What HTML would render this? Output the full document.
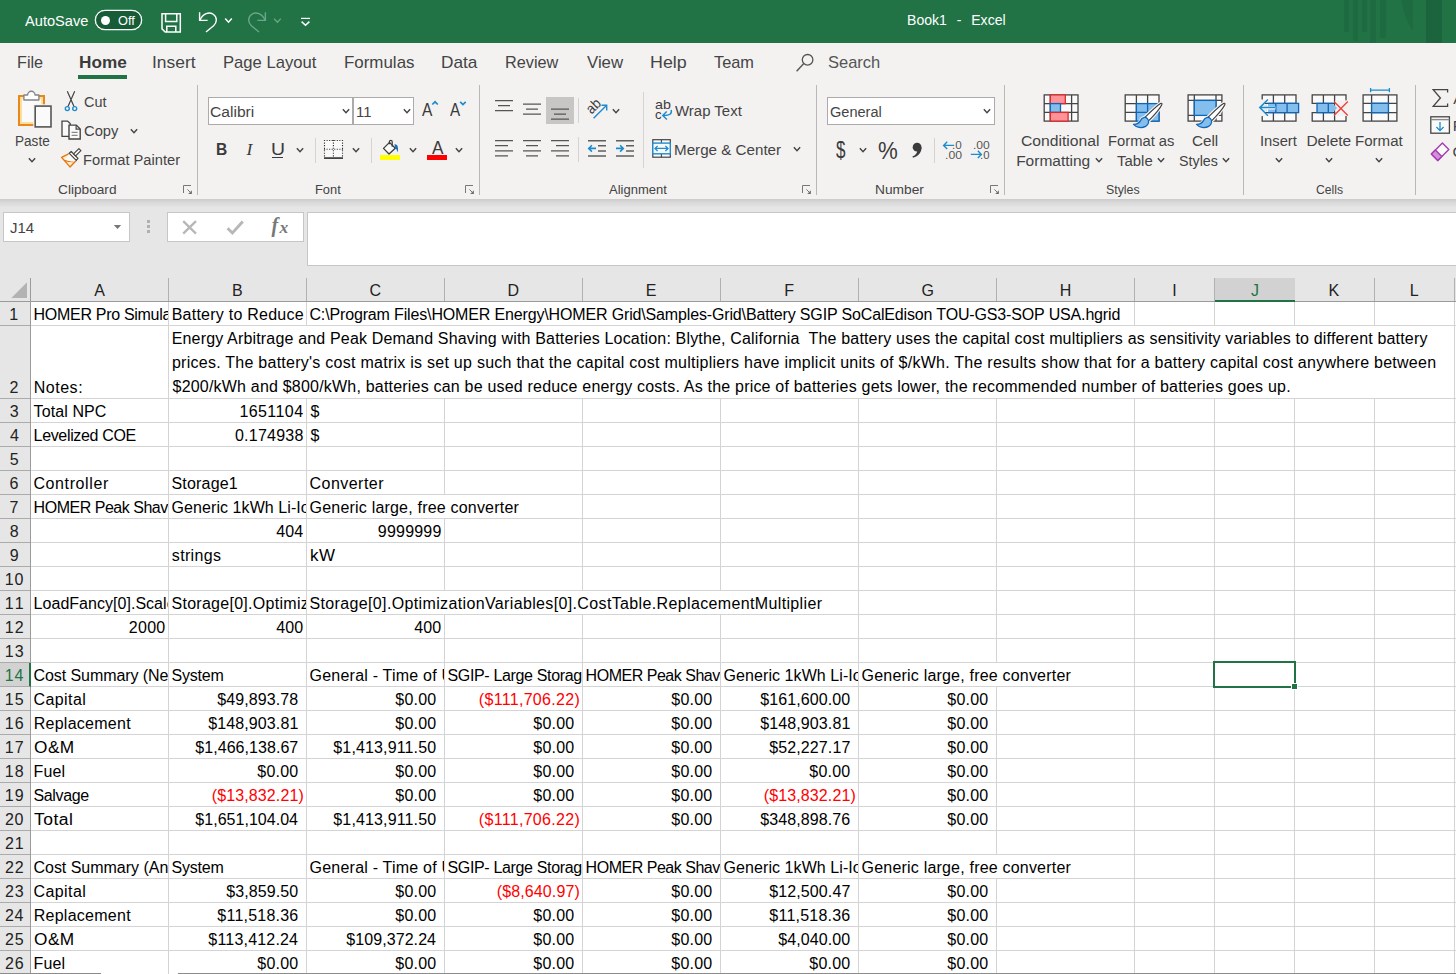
<!DOCTYPE html>
<html lang="en">
<head>
<meta charset="utf-8">
<title>Book1 - Excel</title>
<style>
html,body{margin:0;padding:0}
body{width:1456px;height:974px;overflow:hidden;position:relative;background:#e6e6e6;font-family:"Liberation Sans",sans-serif;color:#000}
.t{position:absolute;white-space:pre;display:block;transform-origin:0 0}
svg{position:absolute;overflow:visible}

#titlebar{position:absolute;left:0;top:0;width:1456px;height:43px;background:#217346;overflow:hidden}
.toggle{position:absolute;left:95px;top:10px;width:45px;height:18px;border:1px solid #fff;box-shadow:0 0 0 .3px #fff;border-radius:10px;background:#185c37}
.toggle i{position:absolute;left:5px;top:4.5px;width:9px;height:9px;border-radius:50%;background:#fff}
#tabs{position:absolute;left:0;top:43px;width:1456px;height:39px;background:#f3f2f1;overflow:hidden}
.tabline{position:absolute;left:78px;top:32px;width:49px;height:4px;background:#217346}
#ribbon{position:absolute;left:0;top:82px;width:1456px;height:117px;background:#f3f2f1;overflow:hidden}
.gsep{position:absolute;top:3px;width:1px;height:110px;background:#b9b8b7}
.sep{position:absolute;width:1px;background:#d4d3d2}
.combo{position:absolute;background:#fff;border:1px solid #ababab}
.uline{position:absolute;height:1px;background:#3b3b3b}
#fbar{position:absolute;left:0;top:199px;width:1456px;height:79px;background:#e6e6e6;overflow:hidden}
#fbar .shadow{position:absolute;left:0;top:0;width:1456px;height:9px;background:linear-gradient(#cbcbcb,#d9d9d9 40%,#e6e6e6)}
.namebox{position:absolute;left:3px;top:13px;width:125px;height:28px;background:#fff;border:1px solid #c6c6c6}
.fxbox{position:absolute;left:167px;top:13px;width:135px;height:28px;background:#fff;border:1px solid #c6c6c6}
.finput{position:absolute;left:307px;top:13px;width:1150px;height:52px;background:#fff;border:1px solid #c6c6c6}

#sheet{position:absolute;left:0;top:278px;width:1456px;height:696px;background:#e6e6e6;overflow:hidden}
#colhead{position:absolute;left:0;top:0;width:1456px;height:23px;border-bottom:1px solid #9b9b9b}
#colhead .corner{position:absolute;left:0;top:0;width:30px;height:23px;border-right:1px solid #9b9b9b}
#colhead .corner svg{display:block}
.ch{position:absolute;top:0;height:23px;border-right:1px solid #b1b1b1}
.ch.sel{background:#d2d2d2;height:22px;border-bottom:2px solid #217346;border-right:0;padding-right:1px}
#rowhead{position:absolute;left:0;top:24px;width:30px;height:672px;border-right:1px solid #9b9b9b}
.rh{position:absolute;left:0;width:30px;border-bottom:1px solid #ababab}
.rh.sel{background:#d2d2d2;width:29px;border-right:2px solid #217346}
.tabedge{position:absolute;top:695px;height:1px;background:#8c8c8c}
#cells{position:absolute;left:31px;top:24px;width:1425px;height:672px;background:#fff;overflow:hidden}
.c{position:absolute;border-right:1px solid #d4d4d4;border-bottom:1px solid #d4d4d4;overflow:hidden}
#selbox{position:absolute;left:1182px;top:359px;width:79px;height:23px;border:2px solid #217346}
#selhandle{position:absolute;left:1260px;top:381px;width:5px;height:5px;background:#217346;border:1px solid #fff}
</style>
</head>
<body>
<div id="titlebar">
<svg class="ic deco" style="left:1340px;top:0px" width="116" height="43" viewBox="1340 0 116 43"><rect x="1344" y="0" width="5" height="32" fill="#1e6b41"/><rect x="1353" y="0" width="5" height="41" fill="#1e6b41"/><rect x="1362" y="0" width="5" height="32" fill="#1e6b41"/><rect x="1370" y="0" width="6" height="43" fill="#1e6b41"/><rect x="1380" y="0" width="6" height="38" fill="#1e6b41"/><path d="M1401.5 0H1413V31C1407 22 1403 11 1401.5 0z" fill="#1e6b41"/><rect x="1426" y="0" width="16" height="43" fill="#1c643d"/></svg>
<span class="t" style="left:24.97px;top:11px;font-size:15.5px;line-height:20px;transform:scaleX(0.943);color:#fff;">AutoSave</span>
<div class="toggle"><i></i><span class="t" style="left:22.2px;top:2px;font-size:12.6px;line-height:16px;transform:scaleX(1.013);color:#fff;">Off</span></div>
<svg class="ic save" style="left:160px;top:11px" width="23" height="23" viewBox="160 11 23 23"><path d="M162 13.7H180.3V32.1H165.2L162 28.9z" fill="none" stroke="#ffffff" stroke-width="1.5"/><path d="M165.6 13.7V21.4H176.8V13.7" fill="none" stroke="#ffffff" stroke-width="1.5"/><path d="M166.8 32.1V26.2H175.8V32.1" fill="none" stroke="#ffffff" stroke-width="1.5"/></svg><svg class="ic undo" style="left:197px;top:10px" width="38" height="24" viewBox="197 10 38 24"><path d="M199.6 12.3V20.4H207.6" fill="none" stroke="#ffffff" stroke-width="1.4"/><path d="M199.9 20.1C203 13.5 209 11.3 213.2 14.3C217.6 17.4 217 22.6 213.6 25.8L206 32" fill="none" stroke="#ffffff" stroke-width="1.4"/><path d="M225.2 18.6L228.5 22.2L231.8 18.6" fill="none" stroke="#ffffff" stroke-width="1.5"/></svg><svg class="ic redo" style="left:246px;top:10px" width="38" height="24" viewBox="246 10 38 24"><path d="M265.4 12.3V20.4H257.4" fill="none" stroke="#6ba688" stroke-width="1.4"/><path d="M265.1 20.1C262 13.5 256 11.3 251.8 14.3C247.4 17.4 248 22.6 251.4 25.8L259 32" fill="none" stroke="#6ba688" stroke-width="1.4"/><path d="M274 18.6L277.4 22.2L280.8 18.6" fill="none" stroke="#6ba688" stroke-width="1.3"/></svg><svg class="ic qatmore" style="left:299px;top:15px" width="13" height="13" viewBox="299 15 13 13"><path d="M301 18.4H310" fill="none" stroke="#ffffff" stroke-width="1.2"/><path d="M301.6 21.6L305.5 25.3L309.4 21.6" fill="none" stroke="#ffffff" stroke-width="1.5"/></svg>
<div class="wtitle"><span class="t" style="left:906.64px;top:10px;font-size:15.5px;line-height:20px;transform:scaleX(0.908);color:#fff;word-spacing:1.1px;">Book1  -  Excel</span></div>
</div>
<div id="tabs">
<span class="t tab" style="left:17.27px;top:9px;font-size:17px;line-height:22px;transform:scaleX(0.951);color:#444444;">File</span>
<span class="t tab active" style="left:78.55px;top:9px;font-size:17px;line-height:22px;transform:scaleX(1.011);color:#3b3b3b;font-weight:bold;">Home</span>
<span class="t tab" style="left:151.99px;top:9px;font-size:17px;line-height:22px;transform:scaleX(1.024);color:#444444;">Insert</span>
<span class="t tab" style="left:222.63px;top:9px;font-size:17px;line-height:22px;transform:scaleX(0.979);color:#444444;">Page Layout</span>
<span class="t tab" style="left:344.11px;top:9px;font-size:17px;line-height:22px;transform:scaleX(0.995);color:#444444;">Formulas</span>
<span class="t tab" style="left:441.09px;top:9px;font-size:17px;line-height:22px;transform:scaleX(1.014);color:#444444;">Data</span>
<span class="t tab" style="left:504.67px;top:9px;font-size:17px;line-height:22px;transform:scaleX(0.956);color:#444444;">Review</span>
<span class="t tab" style="left:586.93px;top:9px;font-size:17px;line-height:22px;transform:scaleX(0.986);color:#444444;">View</span>
<span class="t tab" style="left:649.54px;top:9px;font-size:17px;line-height:22px;transform:scaleX(1.050);color:#444444;">Help</span>
<span class="t tab" style="left:714.13px;top:9px;font-size:17px;line-height:22px;transform:scaleX(0.961);color:#444444;">Team</span>
<div class="tabline"></div>
<svg class="ic search" style="left:795px;top:9px" width="20" height="21" viewBox="795 52 20 21"><circle cx="807.6" cy="59.8" r="5.3" fill="none" stroke="#555" stroke-width="1.3"/><path d="M803.8 63.6L796.6 71.2" fill="none" stroke="#555" stroke-width="1.4"/></svg>
<span class="t" style="left:828.25px;top:9px;font-size:17px;line-height:22px;transform:scaleX(0.971);color:#555;">Search</span>
</div>
<div id="ribbon">
<div class="gsep" style="left:197px"></div>
<div class="gsep" style="left:479px"></div>
<div class="gsep" style="left:816px"></div>
<div class="gsep" style="left:1004px"></div>
<div class="gsep" style="left:1243px"></div>
<div class="gsep" style="left:1415px"></div>
<div class="sep" style="left:315px;top:56px;height:25px"></div>
<div class="sep" style="left:371px;top:56px;height:25px"></div>
<div class="sep" style="left:578px;top:16px;height:25px"></div>
<div class="sep" style="left:578px;top:55px;height:25px"></div>
<div class="sep" style="left:643px;top:10px;height:76px"></div>
<div class="sep" style="left:934px;top:56px;height:25px"></div>
<div class="group" id="g-clipboard">
<svg class="ic paste" style="left:16px;top:6px" width="38" height="42" viewBox="16 88 38 42"><rect x="19" y="96" width="25" height="29" fill="#fafafa" stroke="#e8871e" stroke-width="2"/><rect x="21" y="98" width="21" height="25" fill="none" stroke="#fbdf9b" stroke-width="2"/><path d="M23.9 95H27.6A3.7 3.7 0 0 1 35 95H38.9V100H23.9z" fill="#fff" stroke="#858585" stroke-width="1.4" stroke-linejoin="round"/><rect x="33.3" y="104.3" width="19.4" height="24.4" fill="#f3f2f1"/><rect x="35.2" y="106.1" width="15.8" height="20.8" fill="#fafafa" stroke="#555" stroke-width="1.6"/></svg>
<span class="t" style="left:14.69px;top:49px;font-size:15.5px;line-height:20px;transform:scaleX(0.876);color:#444444;">Paste</span>
<svg class="ic chev" style="left:26.5px;top:73.5px" width="10" height="8" viewBox="26.5 155.5 10 8"><path d="M28.35 157.8L31.5 161.2L34.65 157.8" fill="none" stroke="#444444" stroke-width="1.45"/></svg>
<svg class="ic cut" style="left:63px;top:8px" width="16" height="23" viewBox="63 90 16 23"><path d="M67.3 91.3L74 106.6M74.7 91.3L68 106.6" fill="none" stroke="#444444" stroke-width="1.2"/><circle cx="67.3" cy="108.6" r="2" fill="none" stroke="#1e8bcd" stroke-width="1.4"/><circle cx="74.7" cy="108.6" r="2" fill="none" stroke="#1e8bcd" stroke-width="1.4"/></svg>
<span class="t" style="left:83.67px;top:10px;font-size:15.5px;line-height:20px;transform:scaleX(0.930);color:#444444;">Cut</span>
<svg class="ic copy" style="left:60px;top:37px" width="23" height="23" viewBox="60 119 23 23"><path d="M62 121.1H67.5L70.2 123.6V136.4H62z" fill="#fafafa" stroke="#444444" stroke-width="1.3"/><path d="M69 125.1H76.3L80.2 129V139H69z" fill="#fafafa" stroke="#444444" stroke-width="1.4"/><path d="M76.1 125.3V129.2H80" fill="none" stroke="#444444" stroke-width="1.2"/><path d="M71.6 132.4H77.6M71.6 135.4H77.6" fill="none" stroke="#8a8a8a" stroke-width="1.1"/></svg>
<span class="t" style="left:83.65px;top:39px;font-size:15.5px;line-height:20px;transform:scaleX(0.950);color:#444444;">Copy</span>
<svg class="ic chev" style="left:128.5px;top:44.5px" width="10" height="8" viewBox="128.5 126.5 10 8"><path d="M130.35 128.8L133.5 132.2L136.65 128.8" fill="none" stroke="#444444" stroke-width="1.45"/></svg>
<svg class="ic painter" style="left:60px;top:65px" width="23" height="22" viewBox="60 147 23 22"><path d="M61.6 157.4L69.2 153.6L76.2 160.6L70 166.9z" fill="#fdf0d0" stroke="#e8740c" stroke-width="1.4" stroke-linejoin="round"/><path d="M64.5 160.2C67.5 161.6 70.2 161.9 73.3 161.7" fill="none" stroke="#e8740c" stroke-width="1.2"/><path d="M65.4 159.3L69.2 153.6L76.2 160.6L72.8 161.4C70 161.6 67.6 160.8 65.4 159.3z" fill="#fafafa"/><path d="M69.3 153.3L71.2 151.5L78 158.3L76.2 160.3z" fill="#fafafa" stroke="#444444" stroke-width="1.2" stroke-linejoin="round"/><path d="M73.6 153.9L78.9 148.6L80.9 150.6L75.6 155.9z" fill="#fafafa" stroke="#444444" stroke-width="1.2" stroke-linejoin="round"/></svg>
<span class="t" style="left:83.2px;top:68px;font-size:15.5px;line-height:20px;transform:scaleX(0.947);color:#444444;">Format Painter</span>
<span class="t" style="left:57.81px;top:99px;font-size:13.6px;line-height:18px;transform:scaleX(1.006);color:#444444;">Clipboard</span>
<svg class="ic launcher" style="left:183px;top:103px" width="10" height="10" viewBox="183 185 10 10"><path d="M183.5 193V185.5H191" fill="none" stroke="#777" stroke-width="1"/><path d="M187.4 189.4L191 193" fill="none" stroke="#777" stroke-width="1"/><path d="M191.9 190.2V193.9H188.2z" fill="#6e6e6e"/></svg>
</div>
<div class="group" id="g-font">
<div class="combo" style="left:208px;top:15px;width:143px;height:26px"><span class="t" style="left:1.21px;top:4px;font-size:15.5px;line-height:20px;transform:scaleX(1.007);color:#444444;">Calibri</span></div>
<svg class="ic chev" style="left:340.5px;top:25.3px" width="10" height="8" viewBox="340.5 107.3 10 8"><path d="M342.35 109.6L345.5 113L348.65 109.6" fill="none" stroke="#444444" stroke-width="1.45"/></svg>
<div class="combo" style="left:353px;top:15px;width:59px;height:26px"><span class="t" style="left:1.87px;top:4px;font-size:15.5px;line-height:20px;transform:scaleX(0.961);color:#444444;">11</span></div>
<svg class="ic chev" style="left:401.5px;top:25.3px" width="10" height="8" viewBox="401.5 107.3 10 8"><path d="M403.35 109.6L406.5 113L409.65 109.6" fill="none" stroke="#444444" stroke-width="1.45"/></svg>
<span class="t" style="left:422.27px;top:17px;font-size:17.5px;line-height:23px;transform:scaleX(0.888);color:#3b3b3b;">A</span>
<span class="t" style="left:450.37px;top:17px;font-size:17.5px;line-height:23px;transform:scaleX(0.870);color:#3b3b3b;">A</span>
<svg class="ic gs" style="left:430px;top:18px" width="38" height="7" viewBox="430 100 38 7"><path d="M432.3 104.5L435.05 101.8L437.8 104.5" fill="none" stroke="#1e8bcd" stroke-width="1.7"/><path d="M460.2 101.9L462.95 104.6L465.7 101.9" fill="none" stroke="#1e8bcd" stroke-width="1.7"/></svg>
<span class="t" style="left:216.46px;top:57px;font-size:16.4px;line-height:21px;transform:scaleX(0.950);color:#3b3b3b;font-weight:bold;">B</span>
<span class="t" style="left:246.57px;top:56px;font-size:17.5px;line-height:23px;color:#3b3b3b;font-family:'Liberation Serif',serif;font-style:italic;">I</span>
<span class="t" style="left:270.51px;top:57px;font-size:16px;line-height:21px;transform:scaleX(1.211);color:#3b3b3b;">U</span>
<div class="uline" style="left:272px;top:75px;width:11px"></div>
<svg class="ic chev" style="left:295.3px;top:64.3px" width="10" height="8" viewBox="295.3 146.3 10 8"><path d="M297.15 148.6L300.3 152L303.45 148.6" fill="none" stroke="#444444" stroke-width="1.45"/></svg>
<svg class="ic borders" style="left:323px;top:57px" width="21" height="21" viewBox="323 139 21 21"><rect x="324.5" y="140.5" width="18" height="16" fill="#fafafa"/><path d="M324 140.5H343M324 149.3H343M324.5 140V157M333.4 140V157M342.5 140V157" fill="none" stroke="#333" stroke-width="1.1" stroke-dasharray="1.1 1.45"/><path d="M324 158.1H343" fill="none" stroke="#444444" stroke-width="1.8"/></svg>
<svg class="ic chev" style="left:351.3px;top:64.3px" width="10" height="8" viewBox="351.3 146.3 10 8"><path d="M353.15 148.6L356.3 152L359.45 148.6" fill="none" stroke="#444444" stroke-width="1.45"/></svg>
<svg class="ic fill" style="left:379px;top:56px" width="22" height="23" viewBox="379 138 22 23"><rect x="380" y="155" width="20" height="5" fill="#ffff00"/><path d="M383.5 148.4L389.5 142.4L395.3 148.2L389 154z" fill="#fafafa" stroke="#3b3b3b" stroke-width="1.3" stroke-linejoin="round"/><path d="M389.4 144.2V141.8C389.4 139.8 392.2 139.8 392.2 141.8V146.8" fill="none" stroke="#3b3b3b" stroke-width="1.2"/><path d="M394.4 144.3C396.8 144.2 398 145.8 398 148.4V152.6C397.2 150.6 396.6 149.2 395.2 148z" fill="#1170c6"/></svg>
<svg class="ic chev" style="left:407.5px;top:64.3px" width="10" height="8" viewBox="407.5 146.3 10 8"><path d="M409.35 148.6L412.5 152L415.65 148.6" fill="none" stroke="#444444" stroke-width="1.45"/></svg>
<span class="t" style="left:431.57px;top:53px;font-size:19px;line-height:25px;transform:scaleX(0.905);color:#3b3b3b;">A</span>
<svg class="ic fcbar" style="left:427px;top:73px" width="20" height="5" viewBox="427 155 20 5"><rect x="427" y="155" width="20" height="5" fill="#ff0000"/></svg>
<svg class="ic chev" style="left:454.3px;top:64.3px" width="10" height="8" viewBox="454.3 146.3 10 8"><path d="M456.15 148.6L459.3 152L462.45 148.6" fill="none" stroke="#444444" stroke-width="1.45"/></svg>
<span class="t" style="left:315.34px;top:99px;font-size:13.6px;line-height:18px;transform:scaleX(0.946);color:#444444;">Font</span>
<svg class="ic launcher" style="left:465px;top:103px" width="10" height="10" viewBox="465 185 10 10"><path d="M465.5 193V185.5H473" fill="none" stroke="#777" stroke-width="1"/><path d="M469.4 189.4L473 193" fill="none" stroke="#777" stroke-width="1"/><path d="M473.9 190.2V193.9H470.2z" fill="#6e6e6e"/></svg>
</div>
<div class="group" id="g-align">
<svg class="ic align" style="left:494px;top:14px" width="81" height="62" viewBox="494 96 81 62"><rect x="546" y="97" width="28" height="27" fill="#c8c6c4"/><path d="M495 100.6H513M498 105.6H510M495 110.6H513M523 104.2H541M526 109.2H538M523 114.2H541M551 109.2H569M554 114.2H566M551 119.2H569M495 140.6H513M495 145.7H508M495 150.8H513M495 155.9H508M523 140.6H541M526 145.7H538M523 150.8H541M526 155.9H538M551 140.6H569M556 145.7H569M551 150.8H569M556 155.9H569" fill="none" stroke="#555" stroke-width="1.3"/></svg>
<span class="t" style="left:584.69px;top:15px;font-size:14.4px;line-height:19px;transform-origin:8.01px 8.8px;transform:rotate(-45deg) scaleX(0.920);color:#3b3b3b;">ab</span>
<svg class="ic orient" style="left:586px;top:17px" width="23" height="21" viewBox="586 99 23 21"><path d="M593.6 118.3L606.4 105.5M601.5 105.3H606.7V110.5" fill="none" stroke="#1e8bcd" stroke-width="1.4"/></svg>
<svg class="ic chev" style="left:610.5px;top:24.5px" width="10" height="8" viewBox="610.5 106.5 10 8"><path d="M612.35 108.8L615.5 112.2L618.65 108.8" fill="none" stroke="#444444" stroke-width="1.45"/></svg>
<svg class="ic indent" style="left:587px;top:57px" width="48" height="19" viewBox="587 139 48 19"><path d="M588 140.8H606M598 145.85H606M598 150.9H606M588 155.95H606" fill="none" stroke="#5f5f5f" stroke-width="1.5"/><path d="M588.8 148.4H596M591.9 145.2L588.7 148.4L591.9 151.6" fill="none" stroke="#1e8bcd" stroke-width="1.6"/><path d="M616 140.8H634M626 145.85H634M626 150.9H634M616 155.95H634" fill="none" stroke="#5f5f5f" stroke-width="1.5"/><path d="M616 148.4H623.2M620.1 145.2L623.3 148.4L620.1 151.6" fill="none" stroke="#1e8bcd" stroke-width="1.6"/></svg>
<span class="t" style="left:654.59px;top:15px;font-size:12.2px;line-height:16px;transform:scaleX(1.172);color:#3b3b3b;">ab</span>
<span class="t" style="left:654.74px;top:25px;font-size:12.2px;line-height:16px;transform:scaleX(1.084);color:#3b3b3b;">c</span>
<svg class="ic wrap" style="left:654px;top:18px" width="20" height="21" viewBox="654 100 20 21"><path d="M671.2 109.8C672.2 113.8 669.6 115.7 663.2 115.5M666.7 111.5L662.7 115.5L666.9 119.6" fill="none" stroke="#1e8bcd" stroke-width="1.4"/></svg>
<span class="t" style="left:675.33px;top:19px;font-size:15.5px;line-height:20px;transform:scaleX(0.965);color:#444444;">Wrap Text</span>
<svg class="ic merge" style="left:651px;top:56px" width="21" height="21" viewBox="651 138 21 21"><rect x="652.8" y="139.7" width="17.5" height="17.5" fill="#fafafa" stroke="#444444" stroke-width="1.2"/><path d="M661.4 139.7V143M661.4 154V157.2" fill="none" stroke="#444444" stroke-width="1.1"/><rect x="652.8" y="143.1" width="17.5" height="10.7" fill="#f6fafd" stroke="#1e8bcd" stroke-width="1.4"/><path d="M655 148.45H668M657.6 145.9L655 148.45L657.6 151M665.4 145.9L668 148.45L665.4 151" fill="none" stroke="#1e8bcd" stroke-width="1.3"/></svg>
<span class="t" style="left:674.16px;top:58px;font-size:15.5px;line-height:20px;transform:scaleX(0.979);color:#444444;">Merge &amp; Center</span>
<svg class="ic chev" style="left:791.5px;top:63.3px" width="10" height="8" viewBox="791.5 145.3 10 8"><path d="M793.35 147.6L796.5 151L799.65 147.6" fill="none" stroke="#444444" stroke-width="1.45"/></svg>
<span class="t" style="left:609.27px;top:99px;font-size:13.6px;line-height:18px;transform:scaleX(0.956);color:#444444;">Alignment</span>
<svg class="ic launcher" style="left:802px;top:103px" width="10" height="10" viewBox="802 185 10 10"><path d="M802.5 193V185.5H810" fill="none" stroke="#777" stroke-width="1"/><path d="M806.4 189.4L810 193" fill="none" stroke="#777" stroke-width="1"/><path d="M810.9 190.2V193.9H807.2z" fill="#6e6e6e"/></svg>
</div>
<div class="group" id="g-number">
<div class="combo" style="left:827px;top:15px;width:166px;height:26px"><span class="t" style="left:1.57px;top:4px;font-size:15.5px;line-height:20px;transform:scaleX(0.938);color:#444444;">General</span></div>
<svg class="ic chev" style="left:982.3px;top:25.3px" width="10" height="8" viewBox="982.3 107.3 10 8"><path d="M984.15 109.6L987.3 113L990.45 109.6" fill="none" stroke="#444444" stroke-width="1.45"/></svg>
<span class="t" style="left:835.72px;top:52px;font-size:24px;line-height:31px;transform:scaleX(0.708);color:#3b3b3b;">$</span>
<svg class="ic chev" style="left:858.3px;top:64.3px" width="10" height="8" viewBox="858.3 146.3 10 8"><path d="M860.15 148.6L863.3 152L866.45 148.6" fill="none" stroke="#444444" stroke-width="1.45"/></svg>
<span class="t" style="left:878.21px;top:53px;font-size:24px;line-height:31px;transform:scaleX(0.927);color:#3b3b3b;">%</span>
<svg class="ic comma" style="left:911px;top:60px" width="12" height="17" viewBox="911 142 12 17"><circle cx="917.1" cy="147.2" r="4.4" fill="#3b3b3b"/><path d="M921.5 147.2C921.8 152.2 918.6 156 913 157.8L912.4 156.6C915.6 155 917.2 153 917.4 150.4z" fill="#3b3b3b"/></svg>
<span class="t" style="left:952.34px;top:56px;font-size:10.8px;line-height:14px;transform:scaleX(1.079);color:#555;">.0</span>
<span class="t" style="left:945.08px;top:66px;font-size:10.8px;line-height:14px;transform:scaleX(1.132);color:#555;">.00</span>
<span class="t" style="left:973.1px;top:56px;font-size:10.8px;line-height:14px;transform:scaleX(1.117);color:#555;">.00</span>
<span class="t" style="left:980.36px;top:66px;font-size:10.8px;line-height:14px;transform:scaleX(1.053);color:#555;">.0</span>
<svg class="ic dec" style="left:942px;top:58px" width="49" height="20" viewBox="942 140 49 20"><path d="M943.6 145.4H954.2M947.2 141.8L943.6 145.4L947.2 149" fill="none" stroke="#1e8bcd" stroke-width="1.4"/><path d="M970.8 154.4H981.4M977.8 150.8L981.4 154.4L977.8 158" fill="none" stroke="#1e8bcd" stroke-width="1.4"/></svg>
<span class="t" style="left:875.27px;top:99px;font-size:13.6px;line-height:18px;transform:scaleX(1.012);color:#444444;">Number</span>
<svg class="ic launcher" style="left:990px;top:103px" width="10" height="10" viewBox="990 185 10 10"><path d="M990.5 193V185.5H998" fill="none" stroke="#777" stroke-width="1"/><path d="M994.4 189.4L998 193" fill="none" stroke="#777" stroke-width="1"/><path d="M998.9 190.2V193.9H995.2z" fill="#6e6e6e"/></svg>
</div>
<div class="group" id="g-styles">
<svg class="ic condfmt" style="left:1043px;top:12px" width="37" height="29" viewBox="1043 94 37 29"><rect x="1044.2" y="94.9" width="33.8" height="26.2" fill="#fafafa" stroke="#444444" stroke-width="1.3"/><path d="M1050.3 94.9V121.1M1071.6 94.9V121.1M1044.2 103.6H1078M1044.2 112.4H1078" fill="none" stroke="#444444" stroke-width="1.3"/><rect x="1050.3" y="94.9" width="15" height="8.7" fill="#ff9399" stroke="#d92b2b" stroke-width="1.3"/><rect x="1050.3" y="103.6" width="10.2" height="8.8" fill="#83beec" stroke="#0f66b9" stroke-width="1.3"/><rect x="1050.3" y="112.4" width="17.8" height="8.7" fill="#ff9399" stroke="#d92b2b" stroke-width="1.3"/></svg>
<span class="t" style="left:1021.2px;top:49px;font-size:15.5px;line-height:20px;transform:scaleX(1.012);color:#444444;">Conditional</span>
<span class="t" style="left:1016.13px;top:69px;font-size:15.5px;line-height:20px;color:#444444;">Formatting</span>
<svg class="ic chev" style="left:1093.5px;top:73.5px" width="10" height="8" viewBox="1093.5 155.5 10 8"><path d="M1095.35 157.8L1098.5 161.2L1101.65 157.8" fill="none" stroke="#444444" stroke-width="1.45"/></svg>
<svg class="ic fmttable" style="left:1123px;top:11px" width="41" height="37" viewBox="1123 93 41 37"><rect x="1125.2" y="94.9" width="33.8" height="26.2" fill="#fafafa" stroke="#444444" stroke-width="1.3"/><path d="M1136.4 94.9V121.1M1147.6 94.9V121.1M1125.2 103.6H1159M1125.2 112.4H1159" fill="none" stroke="#444444" stroke-width="1.3"/><rect x="1136.4" y="103.6" width="22.6" height="17.5" fill="#83beec" stroke="#0f66b9" stroke-width="1.3"/><path d="M1147.6 103.6V121.1M1136.4 112.4H1159" fill="none" stroke="#0f66b9" stroke-width="1.3"/><g transform="translate(0 0)"><path d="M1144.6 117.6C1150 112.5 1156.5 105.6 1160.6 103.4C1161.7 102.9 1162.3 103.6 1161.8 104.7C1159.6 109.3 1153 116.4 1148.3 121.2z" fill="none" stroke="#f3f2f1" stroke-width="3.4" stroke-linejoin="round"/><path d="M1133.5 124.4C1137.6 124.6 1139.4 122.6 1140.6 120.4C1142.2 117.2 1145.4 116.6 1147.4 118.6C1149.6 120.8 1148.8 124.4 1145.6 126.4C1141.6 128.6 1136.6 127.7 1133.5 124.4z" fill="none" stroke="#f3f2f1" stroke-width="3.2" stroke-linejoin="round"/><path d="M1144.6 117.6C1150 112.5 1156.5 105.6 1160.6 103.4C1161.7 102.9 1162.3 103.6 1161.8 104.7C1159.6 109.3 1153 116.4 1148.3 121.2z" fill="#fff" stroke="#3b3b3b" stroke-width="1.1" stroke-linejoin="round"/><path d="M1133.5 124.4C1137.6 124.6 1139.4 122.6 1140.6 120.4C1142.2 117.2 1145.4 116.6 1147.4 118.6C1149.6 120.8 1148.8 124.4 1145.6 126.4C1141.6 128.6 1136.6 127.7 1133.5 124.4z" fill="#83beec" stroke="#0f66b9" stroke-width="1.3" stroke-linejoin="round"/></g></svg>
<span class="t" style="left:1108.09px;top:49px;font-size:15.5px;line-height:20px;transform:scaleX(0.952);color:#444444;">Format as</span>
<span class="t" style="left:1116.66px;top:69px;font-size:15.5px;line-height:20px;transform:scaleX(0.963);color:#444444;">Table</span>
<svg class="ic chev" style="left:1155.5px;top:73.5px" width="10" height="8" viewBox="1155.5 155.5 10 8"><path d="M1157.35 157.8L1160.5 161.2L1163.65 157.8" fill="none" stroke="#444444" stroke-width="1.45"/></svg>
<svg class="ic cellstyles" style="left:1186px;top:11px" width="41" height="37" viewBox="1186 93 41 37"><rect x="1188.1" y="94.9" width="33.8" height="26.2" fill="#fafafa" stroke="#444444" stroke-width="1.3"/><path d="M1194.3 94.9V121.1M1216 94.9V121.1M1188.1 100.4H1221.9M1188.1 115.4H1221.9" fill="none" stroke="#444444" stroke-width="1.3"/><rect x="1194.3" y="100.4" width="21.7" height="15" fill="#83beec" stroke="#0f66b9" stroke-width="1.3"/><g transform="translate(63 0)"><path d="M1144.6 117.6C1150 112.5 1156.5 105.6 1160.6 103.4C1161.7 102.9 1162.3 103.6 1161.8 104.7C1159.6 109.3 1153 116.4 1148.3 121.2z" fill="none" stroke="#f3f2f1" stroke-width="3.4" stroke-linejoin="round"/><path d="M1133.5 124.4C1137.6 124.6 1139.4 122.6 1140.6 120.4C1142.2 117.2 1145.4 116.6 1147.4 118.6C1149.6 120.8 1148.8 124.4 1145.6 126.4C1141.6 128.6 1136.6 127.7 1133.5 124.4z" fill="none" stroke="#f3f2f1" stroke-width="3.2" stroke-linejoin="round"/><path d="M1144.6 117.6C1150 112.5 1156.5 105.6 1160.6 103.4C1161.7 102.9 1162.3 103.6 1161.8 104.7C1159.6 109.3 1153 116.4 1148.3 121.2z" fill="#fff" stroke="#3b3b3b" stroke-width="1.1" stroke-linejoin="round"/><path d="M1133.5 124.4C1137.6 124.6 1139.4 122.6 1140.6 120.4C1142.2 117.2 1145.4 116.6 1147.4 118.6C1149.6 120.8 1148.8 124.4 1145.6 126.4C1141.6 128.6 1136.6 127.7 1133.5 124.4z" fill="#83beec" stroke="#0f66b9" stroke-width="1.3" stroke-linejoin="round"/></g></svg>
<span class="t" style="left:1192.23px;top:49px;font-size:15.5px;line-height:20px;transform:scaleX(0.981);color:#444444;">Cell</span>
<span class="t" style="left:1178.65px;top:69px;font-size:15.5px;line-height:20px;transform:scaleX(0.921);color:#444444;">Styles</span>
<svg class="ic chev" style="left:1220.5px;top:73.5px" width="10" height="8" viewBox="1220.5 155.5 10 8"><path d="M1222.35 157.8L1225.5 161.2L1228.65 157.8" fill="none" stroke="#444444" stroke-width="1.45"/></svg>
<span class="t" style="left:1106.44px;top:99px;font-size:13.6px;line-height:18px;transform:scaleX(0.910);color:#444444;">Styles</span>
</div>
<div class="group" id="g-cells">
<svg class="ic ins" style="left:1258px;top:11px" width="42" height="30" viewBox="1258 93 42 30"><rect x="1262.2" y="94.9" width="33.8" height="26.2" fill="#fafafa" stroke="#444444" stroke-width="1.3"/><path d="M1273.4 94.9V121.1M1284.7 94.9V121.1M1262.2 103.3H1296M1262.2 112.7H1296" fill="none" stroke="#444444" stroke-width="1.3"/><rect x="1259" y="99.5" width="6" height="16.6" fill="#f3f2f1"/><path d="M1268 103.3H1298.6V112.7H1268" fill="#83beec" stroke="#0f66b9" stroke-width="1.3"/><path d="M1275.8 103.3V112.7M1287.1 103.3V112.7" fill="none" stroke="#0f66b9" stroke-width="1.3"/><path d="M1261 108L1267 104V112z" fill="#cfe4f6"/><path d="M1260.6 108H1275.4" fill="none" stroke="#f3f8fc" stroke-width="3"/><path d="M1267.9 99.5L1259.8 107.6L1267.9 115.7M1260.2 107.6H1275.2" fill="none" stroke="#1e8bcd" stroke-width="1.5"/></svg>
<span class="t" style="left:1260.24px;top:49px;font-size:15.5px;line-height:20px;transform:scaleX(0.951);color:#444444;">Insert</span>
<svg class="ic chev" style="left:1273.5px;top:73.5px" width="10" height="8" viewBox="1273.5 155.5 10 8"><path d="M1275.35 157.8L1278.5 161.2L1281.65 157.8" fill="none" stroke="#444444" stroke-width="1.45"/></svg>
<svg class="ic dele" style="left:1309px;top:11px" width="41" height="30" viewBox="1309 93 41 30"><rect x="1312.2" y="94.9" width="33.8" height="26.2" fill="#fafafa" stroke="#444444" stroke-width="1.3"/><path d="M1323.4 94.9V121.1M1334.6 94.9V121.1M1312.2 103.3H1346M1312.2 112.7H1346" fill="none" stroke="#444444" stroke-width="1.3"/><rect x="1311" y="104" width="5.6" height="8" fill="#f3f2f1"/><rect x="1335.4" y="100.4" width="13" height="15.6" fill="#f3f2f1"/><path d="M1316.6 103.3V112.7" fill="none" stroke="#444444" stroke-width="1.1" opacity=".0"/><path d="M1332.6 103.6L1337.2 108L1332.6 112.4z" fill="#83beec"/><path d="M1333 103.3H1317V112.7H1333" fill="#83beec" stroke="#0f66b9" stroke-width="1.3"/><path d="M1328.3 103.3V112.7" fill="none" stroke="#0f66b9" stroke-width="1.3"/><path d="M1334 101.6L1347.8 115.6M1347.8 101.6L1334 115.6" fill="none" stroke="#f0433f" stroke-width="1.4"/></svg>
<span class="t" style="left:1306.43px;top:49px;font-size:15.5px;line-height:20px;color:#444444;">Delete</span>
<svg class="ic chev" style="left:1323.5px;top:73.5px" width="10" height="8" viewBox="1323.5 155.5 10 8"><path d="M1325.35 157.8L1328.5 161.2L1331.65 157.8" fill="none" stroke="#444444" stroke-width="1.45"/></svg>
<svg class="ic fmt" style="left:1361px;top:5px" width="38" height="36" viewBox="1361 87 38 36"><rect x="1363.1" y="94.9" width="33.8" height="26.2" fill="#fafafa" stroke="#444444" stroke-width="1.3"/><path d="M1371.6 94.9V121.1M1388.4 94.9V121.1M1363.1 103.3H1396.9M1363.1 112.7H1396.9" fill="none" stroke="#444444" stroke-width="1.3"/><rect x="1371.6" y="103.3" width="16.8" height="9.4" fill="#83beec" stroke="#0f66b9" stroke-width="1.3"/><path d="M1370.6 90.1H1389.4M1370.6 88V92.2M1389.4 88V92.2" fill="none" stroke="#1e8bcd" stroke-width="1.3"/></svg>
<span class="t" style="left:1355.36px;top:49px;font-size:15.5px;line-height:20px;transform:scaleX(0.973);color:#444444;">Format</span>
<svg class="ic chev" style="left:1374.3px;top:73.5px" width="10" height="8" viewBox="1374.3 155.5 10 8"><path d="M1376.15 157.8L1379.3 161.2L1382.45 157.8" fill="none" stroke="#444444" stroke-width="1.45"/></svg>
<span class="t" style="left:1315.98px;top:99px;font-size:13.6px;line-height:18px;transform:scaleX(0.895);color:#444444;">Cells</span>
</div>
<div class="group" id="g-editing">
<svg class="ic editing" style="left:1429px;top:5px" width="27" height="76" viewBox="1429 87 27 76"><path d="M1447.6 92.4V89.7H1433.2L1440.4 98L1433.2 106.4H1447.6V103.6" fill="none" stroke="#444444" stroke-width="1.3" stroke-linejoin="miter"/><rect x="1430.8" y="116.8" width="18.6" height="16.4" fill="#fafafa" stroke="#444444" stroke-width="1.3"/><path d="M1430.8 119.6H1449.4" fill="none" stroke="#8a8a8a" stroke-width="1.4"/><path d="M1440 122V130.4M1436.4 127L1440 130.6L1443.6 127" fill="none" stroke="#1e8bcd" stroke-width="1.3"/><path d="M1431.4 154L1442.4 143L1448.8 149.4L1437.8 160.4z" fill="#fafafa" stroke="#a33db2" stroke-width="1.4" stroke-linejoin="round"/><path d="M1431.4 154L1435.4 150L1441.8 156.4L1437.8 160.4z" fill="#d68fdc" stroke="#a33db2" stroke-width="1.4" stroke-linejoin="round"/></svg>
<span class="t" style="left:1453.17px;top:7px;font-size:15.5px;line-height:20px;color:#444444;">AutoSum</span>
<span class="t" style="left:1452.73px;top:34px;font-size:15.5px;line-height:20px;color:#444444;">Fill</span>
<span class="t" style="left:1452.61px;top:60px;font-size:15.5px;line-height:20px;color:#444444;">Clear</span>
</div>
</div>
<div id="fbar">
<div class="shadow"></div>
<div class="namebox"><span class="t" style="left:5.77px;top:5px;font-size:15.2px;line-height:20px;transform:scaleX(0.986);color:#444;">J14</span><svg class="ic dd" style="left:109px;top:11px" width="9" height="6" viewBox="113 224 9 6"><path d="M113.8 225H121.2L117.5 229z" fill="#777"/></svg></div>
<svg class="ic dots" style="left:147px;top:21px" width="3" height="13" viewBox="147 220 3 13"><rect x="147" y="220" width="3" height="3" fill="#b0b0b0"/><rect x="147" y="225" width="3" height="3" fill="#b0b0b0"/><rect x="147" y="230" width="3" height="3" fill="#b0b0b0"/></svg>
<div class="fxbox"><svg class="ic fxb" style="left:12px;top:5px" width="66" height="19" viewBox="180 218 66 19"><path d="M183.2 221.2L196 233.6M196 221.2L183.2 233.6" fill="none" stroke="#b7b7b7" stroke-width="2.3"/><path d="M227.6 228.2L232.4 233L242.8 221.6" fill="none" stroke="#b7b7b7" stroke-width="2.9"/></svg><span class="t" style="left:103.6px;top:-1px;font-size:20px;line-height:26px;color:#787878;font-family:'Liberation Serif',serif;font-style:italic;font-weight:bold;">f</span><span class="t" style="left:111.41px;top:3px;font-size:17.5px;line-height:23px;color:#787878;font-family:'Liberation Serif',serif;font-style:italic;font-weight:bold;">x</span></div>
<div class="finput"></div>
</div>
<div id="sheet">
<div id="colhead">
<div class="corner"><svg width="30" height="23" viewBox="0 0 30 23"><path d="M27 4.3V20H11.3z" fill="#b3b3b3"/></svg></div>
<div class="ch" style="left:31px;width:137px"><span class="t" style="left:63.16px;top:2px;font-size:16px;line-height:21px;color:#222;">A</span></div>
<div class="ch" style="left:169px;width:137px"><span class="t" style="left:62.93px;top:2px;font-size:16px;line-height:21px;color:#222;">B</span></div>
<div class="ch" style="left:307px;width:137px"><span class="t" style="left:62.62px;top:2px;font-size:16px;line-height:21px;color:#222;">C</span></div>
<div class="ch" style="left:445px;width:137px"><span class="t" style="left:62.45px;top:2px;font-size:16px;line-height:21px;color:#222;">D</span></div>
<div class="ch" style="left:583px;width:137px"><span class="t" style="left:62.85px;top:2px;font-size:16px;line-height:21px;color:#222;">E</span></div>
<div class="ch" style="left:721px;width:137px"><span class="t" style="left:63.28px;top:2px;font-size:16px;line-height:21px;color:#222;">F</span></div>
<div class="ch" style="left:859px;width:137px"><span class="t" style="left:62.47px;top:2px;font-size:16px;line-height:21px;color:#222;">G</span></div>
<div class="ch" style="left:997px;width:137px"><span class="t" style="left:62.72px;top:2px;font-size:16px;line-height:21px;color:#222;">H</span></div>
<div class="ch" style="left:1135px;width:79px"><span class="t" style="left:37.28px;top:2px;font-size:16px;line-height:21px;color:#222;">I</span></div>
<div class="ch sel" style="left:1215px;width:79px"><span class="t" style="left:35.97px;top:2px;font-size:16px;line-height:21px;color:#217346;">J</span></div>
<div class="ch" style="left:1295px;width:79px"><span class="t" style="left:33.6px;top:2px;font-size:16px;line-height:21px;color:#222;">K</span></div>
<div class="ch" style="left:1375px;width:79px"><span class="t" style="left:34.66px;top:2px;font-size:16px;line-height:21px;color:#222;">L</span></div>
<div class="ch" style="left:1455px;width:79px"><span class="t" style="left:32.84px;top:2px;font-size:16px;line-height:21px;color:#222;">M</span></div>
</div>
<div id="rowhead">
<div class="rh" style="top:0px;height:23px"><span class="t" style="left:9.18px;top:2px;font-size:16px;line-height:21px;color:#222;">1</span></div>
<div class="rh" style="top:24px;height:72px"><span class="t" style="left:9.6px;top:51px;font-size:16px;line-height:21px;color:#222;">2</span></div>
<div class="rh" style="top:97px;height:23px"><span class="t" style="left:9.79px;top:2px;font-size:16px;line-height:21px;color:#222;">3</span></div>
<div class="rh" style="top:121px;height:23px"><span class="t" style="left:10.03px;top:2px;font-size:16px;line-height:21px;color:#222;">4</span></div>
<div class="rh" style="top:145px;height:23px"><span class="t" style="left:9.76px;top:2px;font-size:16px;line-height:21px;color:#222;">5</span></div>
<div class="rh" style="top:169px;height:23px"><span class="t" style="left:9.59px;top:2px;font-size:16px;line-height:21px;color:#222;">6</span></div>
<div class="rh" style="top:193px;height:23px"><span class="t" style="left:9.58px;top:2px;font-size:16px;line-height:21px;color:#222;">7</span></div>
<div class="rh" style="top:217px;height:23px"><span class="t" style="left:9.7px;top:2px;font-size:16px;line-height:21px;color:#222;">8</span></div>
<div class="rh" style="top:241px;height:23px"><span class="t" style="left:9.65px;top:2px;font-size:16px;line-height:21px;color:#222;">9</span></div>
<div class="rh" style="top:265px;height:23px"><span class="t" style="left:4.68px;top:2px;font-size:16px;line-height:21px;letter-spacing:1.05px;color:#222;">10</span></div>
<div class="rh" style="top:289px;height:23px"><span class="t" style="left:4.68px;top:2px;font-size:16px;line-height:21px;letter-spacing:2.39px;color:#222;">11</span></div>
<div class="rh" style="top:313px;height:23px"><span class="t" style="left:4.68px;top:2px;font-size:16px;line-height:21px;letter-spacing:1.23px;color:#222;">12</span></div>
<div class="rh" style="top:337px;height:23px"><span class="t" style="left:4.68px;top:2px;font-size:16px;line-height:21px;letter-spacing:1.12px;color:#222;">13</span></div>
<div class="rh sel" style="top:361px;height:23px"><span class="t" style="left:4.68px;top:2px;font-size:16px;line-height:21px;letter-spacing:0.89px;color:#217346;">14</span></div>
<div class="rh" style="top:385px;height:23px"><span class="t" style="left:4.68px;top:2px;font-size:16px;line-height:21px;letter-spacing:1.09px;color:#222;">15</span></div>
<div class="rh" style="top:409px;height:23px"><span class="t" style="left:4.68px;top:2px;font-size:16px;line-height:21px;letter-spacing:1.12px;color:#222;">16</span></div>
<div class="rh" style="top:433px;height:23px"><span class="t" style="left:4.68px;top:2px;font-size:16px;line-height:21px;letter-spacing:1.23px;color:#222;">17</span></div>
<div class="rh" style="top:457px;height:23px"><span class="t" style="left:4.68px;top:2px;font-size:16px;line-height:21px;letter-spacing:1.12px;color:#222;">18</span></div>
<div class="rh" style="top:481px;height:23px"><span class="t" style="left:4.68px;top:2px;font-size:16px;line-height:21px;letter-spacing:1.18px;color:#222;">19</span></div>
<div class="rh" style="top:505px;height:23px"><span class="t" style="left:5.1px;top:2px;font-size:16px;line-height:21px;letter-spacing:0.63px;color:#222;">20</span></div>
<div class="rh" style="top:529px;height:23px"><span class="t" style="left:5.1px;top:2px;font-size:16px;line-height:21px;letter-spacing:0.79px;color:#222;">21</span></div>
<div class="rh" style="top:553px;height:23px"><span class="t" style="left:5.1px;top:2px;font-size:16px;line-height:21px;letter-spacing:0.81px;color:#222;">22</span></div>
<div class="rh" style="top:577px;height:23px"><span class="t" style="left:5.1px;top:2px;font-size:16px;line-height:21px;letter-spacing:0.71px;color:#222;">23</span></div>
<div class="rh" style="top:601px;height:23px"><span class="t" style="left:5.1px;top:2px;font-size:16px;line-height:21px;letter-spacing:0.48px;color:#222;">24</span></div>
<div class="rh" style="top:625px;height:23px"><span class="t" style="left:5.1px;top:2px;font-size:16px;line-height:21px;letter-spacing:0.68px;color:#222;">25</span></div>
<div class="rh" style="top:649px;height:23px"><span class="t" style="left:5.1px;top:2px;font-size:16px;line-height:21px;letter-spacing:0.71px;color:#222;">26</span></div>
</div>
<div id="cells">
<div class="c" style="left:0px;top:0px;width:137px;height:23px"><span class="t" style="left:2.62px;top:2px;font-size:16px;line-height:21px;letter-spacing:-0.3px;">HOMER Pro Simulation Name</span></div>
<div class="c" style="left:138px;top:0px;width:137px;height:23px"><span class="t" style="left:2.65px;top:2px;font-size:16px;line-height:21px;letter-spacing:0.24px;">Battery to Reduce Demand Charges</span></div>
<div class="c" style="left:276px;top:0px;width:827px;height:23px"><span class="t" style="left:2.48px;top:2px;font-size:16px;line-height:21px;letter-spacing:-0.15px;">C:\Program Files\HOMER Energy\HOMER Grid\Samples-Grid\Battery SGIP SoCalEdison TOU-GS3-SOP USA.hgrid</span></div>
<div class="c" style="left:1104px;top:0px;width:79px;height:23px"></div>
<div class="c" style="left:1184px;top:0px;width:79px;height:23px"></div>
<div class="c" style="left:1264px;top:0px;width:79px;height:23px"></div>
<div class="c" style="left:1344px;top:0px;width:79px;height:23px"></div>
<div class="c" style="left:1424px;top:0px;width:79px;height:23px"></div>
<div class="c" style="left:0px;top:24px;width:137px;height:72px"><span class="t" style="left:2.69px;top:51px;font-size:16px;line-height:21px;letter-spacing:0.53px;">Notes:</span></div>
<div class="c" style="left:138px;top:24px;width:1285px;height:72px"><span class="t" style="left:2.66px;top:2px;font-size:16px;line-height:21px;letter-spacing:0.17px;">Energy Arbitrage and Peak Demand Shaving with Batteries Location: Blythe, California  The battery uses the capital cost multipliers as sensitivity variables to different battery</span><span class="t" style="left:2.91px;top:26px;font-size:16px;line-height:21px;letter-spacing:0.26px;">prices. The battery's cost matrix is set up such that the capital cost multipliers have implicit units of $/kWh. The results show that for a battery capital cost anywhere between</span><span class="t" style="left:3.55px;top:50px;font-size:16px;line-height:21px;letter-spacing:0.2px;">$200/kWh and $800/kWh, batteries can be used reduce energy costs. As the price of batteries gets lower, the recommended number of batteries goes up.</span></div>
<div class="c" style="left:1424px;top:24px;width:79px;height:72px"></div>
<div class="c" style="left:0px;top:97px;width:137px;height:23px"><span class="t" style="left:2.55px;top:2px;font-size:16px;line-height:21px;letter-spacing:0.1px;">Total NPC</span></div>
<div class="c" style="left:138px;top:97px;width:137px;height:23px"><span class="t" style="left:70.38px;top:2px;font-size:16px;line-height:21px;letter-spacing:0.43px;">1651104</span></div>
<div class="c" style="left:276px;top:97px;width:137px;height:23px"><span class="t" style="left:3.55px;top:2px;font-size:16px;line-height:21px;">$</span></div>
<div class="c" style="left:414px;top:97px;width:137px;height:23px"></div>
<div class="c" style="left:552px;top:97px;width:137px;height:23px"></div>
<div class="c" style="left:690px;top:97px;width:137px;height:23px"></div>
<div class="c" style="left:828px;top:97px;width:137px;height:23px"></div>
<div class="c" style="left:966px;top:97px;width:137px;height:23px"></div>
<div class="c" style="left:1104px;top:97px;width:79px;height:23px"></div>
<div class="c" style="left:1184px;top:97px;width:79px;height:23px"></div>
<div class="c" style="left:1264px;top:97px;width:79px;height:23px"></div>
<div class="c" style="left:1344px;top:97px;width:79px;height:23px"></div>
<div class="c" style="left:1424px;top:97px;width:79px;height:23px"></div>
<div class="c" style="left:0px;top:121px;width:137px;height:23px"><span class="t" style="left:2.6px;top:2px;font-size:16px;line-height:21px;letter-spacing:-0.34px;">Levelized COE</span></div>
<div class="c" style="left:138px;top:121px;width:137px;height:23px"><span class="t" style="left:65.97px;top:2px;font-size:16px;line-height:21px;letter-spacing:0.23px;">0.174938</span></div>
<div class="c" style="left:276px;top:121px;width:137px;height:23px"><span class="t" style="left:3.55px;top:2px;font-size:16px;line-height:21px;">$</span></div>
<div class="c" style="left:414px;top:121px;width:137px;height:23px"></div>
<div class="c" style="left:552px;top:121px;width:137px;height:23px"></div>
<div class="c" style="left:690px;top:121px;width:137px;height:23px"></div>
<div class="c" style="left:828px;top:121px;width:137px;height:23px"></div>
<div class="c" style="left:966px;top:121px;width:137px;height:23px"></div>
<div class="c" style="left:1104px;top:121px;width:79px;height:23px"></div>
<div class="c" style="left:1184px;top:121px;width:79px;height:23px"></div>
<div class="c" style="left:1264px;top:121px;width:79px;height:23px"></div>
<div class="c" style="left:1344px;top:121px;width:79px;height:23px"></div>
<div class="c" style="left:1424px;top:121px;width:79px;height:23px"></div>
<div class="c" style="left:0px;top:145px;width:137px;height:23px"></div>
<div class="c" style="left:138px;top:145px;width:137px;height:23px"></div>
<div class="c" style="left:276px;top:145px;width:137px;height:23px"></div>
<div class="c" style="left:414px;top:145px;width:137px;height:23px"></div>
<div class="c" style="left:552px;top:145px;width:137px;height:23px"></div>
<div class="c" style="left:690px;top:145px;width:137px;height:23px"></div>
<div class="c" style="left:828px;top:145px;width:137px;height:23px"></div>
<div class="c" style="left:966px;top:145px;width:137px;height:23px"></div>
<div class="c" style="left:1104px;top:145px;width:79px;height:23px"></div>
<div class="c" style="left:1184px;top:145px;width:79px;height:23px"></div>
<div class="c" style="left:1264px;top:145px;width:79px;height:23px"></div>
<div class="c" style="left:1344px;top:145px;width:79px;height:23px"></div>
<div class="c" style="left:1424px;top:145px;width:79px;height:23px"></div>
<div class="c" style="left:0px;top:169px;width:137px;height:23px"><span class="t" style="left:2.48px;top:2px;font-size:16px;line-height:21px;letter-spacing:0.6px;">Controller</span></div>
<div class="c" style="left:138px;top:169px;width:137px;height:23px"><span class="t" style="left:2.46px;top:2px;font-size:16px;line-height:21px;letter-spacing:0.19px;">Storage1</span></div>
<div class="c" style="left:276px;top:169px;width:137px;height:23px"><span class="t" style="left:2.48px;top:2px;font-size:16px;line-height:21px;letter-spacing:0.48px;">Converter</span></div>
<div class="c" style="left:414px;top:169px;width:137px;height:23px"></div>
<div class="c" style="left:552px;top:169px;width:137px;height:23px"></div>
<div class="c" style="left:690px;top:169px;width:137px;height:23px"></div>
<div class="c" style="left:828px;top:169px;width:137px;height:23px"></div>
<div class="c" style="left:966px;top:169px;width:137px;height:23px"></div>
<div class="c" style="left:1104px;top:169px;width:79px;height:23px"></div>
<div class="c" style="left:1184px;top:169px;width:79px;height:23px"></div>
<div class="c" style="left:1264px;top:169px;width:79px;height:23px"></div>
<div class="c" style="left:1344px;top:169px;width:79px;height:23px"></div>
<div class="c" style="left:1424px;top:169px;width:79px;height:23px"></div>
<div class="c" style="left:0px;top:193px;width:137px;height:23px"><span class="t" style="left:2.62px;top:2px;font-size:16px;line-height:21px;letter-spacing:-0.48px;">HOMER Peak Shaving</span></div>
<div class="c" style="left:138px;top:193px;width:137px;height:23px"><span class="t" style="left:2.57px;top:2px;font-size:16px;line-height:21px;letter-spacing:0.07px;">Generic 1kWh Li-Ion</span></div>
<div class="c" style="left:276px;top:193px;width:275px;height:23px"><span class="t" style="left:2.57px;top:2px;font-size:16px;line-height:21px;letter-spacing:0.2px;">Generic large, free converter</span></div>
<div class="c" style="left:552px;top:193px;width:137px;height:23px"></div>
<div class="c" style="left:690px;top:193px;width:137px;height:23px"></div>
<div class="c" style="left:828px;top:193px;width:137px;height:23px"></div>
<div class="c" style="left:966px;top:193px;width:137px;height:23px"></div>
<div class="c" style="left:1104px;top:193px;width:79px;height:23px"></div>
<div class="c" style="left:1184px;top:193px;width:79px;height:23px"></div>
<div class="c" style="left:1264px;top:193px;width:79px;height:23px"></div>
<div class="c" style="left:1344px;top:193px;width:79px;height:23px"></div>
<div class="c" style="left:1424px;top:193px;width:79px;height:23px"></div>
<div class="c" style="left:0px;top:217px;width:137px;height:23px"></div>
<div class="c" style="left:138px;top:217px;width:137px;height:23px"><span class="t" style="left:107.23px;top:2px;font-size:16px;line-height:21px;letter-spacing:0.07px;">404</span></div>
<div class="c" style="left:276px;top:217px;width:137px;height:23px"><span class="t" style="left:70.85px;top:2px;font-size:16px;line-height:21px;letter-spacing:0.2px;">9999999</span></div>
<div class="c" style="left:414px;top:217px;width:137px;height:23px"></div>
<div class="c" style="left:552px;top:217px;width:137px;height:23px"></div>
<div class="c" style="left:690px;top:217px;width:137px;height:23px"></div>
<div class="c" style="left:828px;top:217px;width:137px;height:23px"></div>
<div class="c" style="left:966px;top:217px;width:137px;height:23px"></div>
<div class="c" style="left:1104px;top:217px;width:79px;height:23px"></div>
<div class="c" style="left:1184px;top:217px;width:79px;height:23px"></div>
<div class="c" style="left:1264px;top:217px;width:79px;height:23px"></div>
<div class="c" style="left:1344px;top:217px;width:79px;height:23px"></div>
<div class="c" style="left:1424px;top:217px;width:79px;height:23px"></div>
<div class="c" style="left:0px;top:241px;width:137px;height:23px"></div>
<div class="c" style="left:138px;top:241px;width:137px;height:23px"><span class="t" style="left:2.87px;top:2px;font-size:16px;line-height:21px;letter-spacing:0.32px;">strings</span></div>
<div class="c" style="left:276px;top:241px;width:137px;height:23px"><span class="t" style="left:2.68px;top:2px;font-size:16px;line-height:21px;letter-spacing:0.45px;transform:scaleX(1.060);">kW</span></div>
<div class="c" style="left:414px;top:241px;width:137px;height:23px"></div>
<div class="c" style="left:552px;top:241px;width:137px;height:23px"></div>
<div class="c" style="left:690px;top:241px;width:137px;height:23px"></div>
<div class="c" style="left:828px;top:241px;width:137px;height:23px"></div>
<div class="c" style="left:966px;top:241px;width:137px;height:23px"></div>
<div class="c" style="left:1104px;top:241px;width:79px;height:23px"></div>
<div class="c" style="left:1184px;top:241px;width:79px;height:23px"></div>
<div class="c" style="left:1264px;top:241px;width:79px;height:23px"></div>
<div class="c" style="left:1344px;top:241px;width:79px;height:23px"></div>
<div class="c" style="left:1424px;top:241px;width:79px;height:23px"></div>
<div class="c" style="left:0px;top:265px;width:137px;height:23px"></div>
<div class="c" style="left:138px;top:265px;width:137px;height:23px"></div>
<div class="c" style="left:276px;top:265px;width:137px;height:23px"></div>
<div class="c" style="left:414px;top:265px;width:137px;height:23px"></div>
<div class="c" style="left:552px;top:265px;width:137px;height:23px"></div>
<div class="c" style="left:690px;top:265px;width:137px;height:23px"></div>
<div class="c" style="left:828px;top:265px;width:137px;height:23px"></div>
<div class="c" style="left:966px;top:265px;width:137px;height:23px"></div>
<div class="c" style="left:1104px;top:265px;width:79px;height:23px"></div>
<div class="c" style="left:1184px;top:265px;width:79px;height:23px"></div>
<div class="c" style="left:1264px;top:265px;width:79px;height:23px"></div>
<div class="c" style="left:1344px;top:265px;width:79px;height:23px"></div>
<div class="c" style="left:1424px;top:265px;width:79px;height:23px"></div>
<div class="c" style="left:0px;top:289px;width:137px;height:23px"><span class="t" style="left:2.6px;top:2px;font-size:16px;line-height:21px;letter-spacing:0.03px;">LoadFancy[0].Scaled Average</span></div>
<div class="c" style="left:138px;top:289px;width:137px;height:23px"><span class="t" style="left:2.46px;top:2px;font-size:16px;line-height:21px;letter-spacing:0.28px;">Storage[0].OptimizationVariables[0].CostTable.CapitalMultiplier</span></div>
<div class="c" style="left:276px;top:289px;width:551px;height:23px"><span class="t" style="left:2.46px;top:2px;font-size:16px;line-height:21px;letter-spacing:0.36px;">Storage[0].OptimizationVariables[0].CostTable.ReplacementMultiplier</span></div>
<div class="c" style="left:828px;top:289px;width:137px;height:23px"></div>
<div class="c" style="left:966px;top:289px;width:137px;height:23px"></div>
<div class="c" style="left:1104px;top:289px;width:79px;height:23px"></div>
<div class="c" style="left:1184px;top:289px;width:79px;height:23px"></div>
<div class="c" style="left:1264px;top:289px;width:79px;height:23px"></div>
<div class="c" style="left:1344px;top:289px;width:79px;height:23px"></div>
<div class="c" style="left:1424px;top:289px;width:79px;height:23px"></div>
<div class="c" style="left:0px;top:313px;width:137px;height:23px"><span class="t" style="left:97.8px;top:2px;font-size:16px;line-height:21px;letter-spacing:0.28px;">2000</span></div>
<div class="c" style="left:138px;top:313px;width:137px;height:23px"><span class="t" style="left:107.23px;top:2px;font-size:16px;line-height:21px;letter-spacing:0.15px;">400</span></div>
<div class="c" style="left:276px;top:313px;width:137px;height:23px"><span class="t" style="left:107.23px;top:2px;font-size:16px;line-height:21px;letter-spacing:0.15px;">400</span></div>
<div class="c" style="left:414px;top:313px;width:137px;height:23px"></div>
<div class="c" style="left:552px;top:313px;width:137px;height:23px"></div>
<div class="c" style="left:690px;top:313px;width:137px;height:23px"></div>
<div class="c" style="left:828px;top:313px;width:137px;height:23px"></div>
<div class="c" style="left:966px;top:313px;width:137px;height:23px"></div>
<div class="c" style="left:1104px;top:313px;width:79px;height:23px"></div>
<div class="c" style="left:1184px;top:313px;width:79px;height:23px"></div>
<div class="c" style="left:1264px;top:313px;width:79px;height:23px"></div>
<div class="c" style="left:1344px;top:313px;width:79px;height:23px"></div>
<div class="c" style="left:1424px;top:313px;width:79px;height:23px"></div>
<div class="c" style="left:0px;top:337px;width:137px;height:23px"></div>
<div class="c" style="left:138px;top:337px;width:137px;height:23px"></div>
<div class="c" style="left:276px;top:337px;width:137px;height:23px"></div>
<div class="c" style="left:414px;top:337px;width:137px;height:23px"></div>
<div class="c" style="left:552px;top:337px;width:137px;height:23px"></div>
<div class="c" style="left:690px;top:337px;width:137px;height:23px"></div>
<div class="c" style="left:828px;top:337px;width:137px;height:23px"></div>
<div class="c" style="left:966px;top:337px;width:137px;height:23px"></div>
<div class="c" style="left:1104px;top:337px;width:79px;height:23px"></div>
<div class="c" style="left:1184px;top:337px;width:79px;height:23px"></div>
<div class="c" style="left:1264px;top:337px;width:79px;height:23px"></div>
<div class="c" style="left:1344px;top:337px;width:79px;height:23px"></div>
<div class="c" style="left:1424px;top:337px;width:79px;height:23px"></div>
<div class="c" style="left:0px;top:361px;width:137px;height:23px"><span class="t" style="left:2.48px;top:2px;font-size:16px;line-height:21px;letter-spacing:-0.07px;">Cost Summary (Net Present)</span></div>
<div class="c" style="left:138px;top:361px;width:137px;height:23px"><span class="t" style="left:2.46px;top:2px;font-size:16px;line-height:21px;letter-spacing:-0.21px;">System</span></div>
<div class="c" style="left:276px;top:361px;width:137px;height:23px"><span class="t" style="left:2.57px;top:2px;font-size:16px;line-height:21px;letter-spacing:0.22px;">General - Time of Use</span></div>
<div class="c" style="left:414px;top:361px;width:137px;height:23px"><span class="t" style="left:2.46px;top:2px;font-size:16px;line-height:21px;letter-spacing:-0.34px;">SGIP- Large Storage</span></div>
<div class="c" style="left:552px;top:361px;width:137px;height:23px"><span class="t" style="left:2.62px;top:2px;font-size:16px;line-height:21px;letter-spacing:-0.48px;">HOMER Peak Shaving</span></div>
<div class="c" style="left:690px;top:361px;width:137px;height:23px"><span class="t" style="left:2.57px;top:2px;font-size:16px;line-height:21px;letter-spacing:0.07px;">Generic 1kWh Li-Ion</span></div>
<div class="c" style="left:828px;top:361px;width:275px;height:23px"><span class="t" style="left:2.57px;top:2px;font-size:16px;line-height:21px;letter-spacing:0.2px;">Generic large, free converter</span></div>
<div class="c" style="left:1104px;top:361px;width:79px;height:23px"></div>
<div class="c" style="left:1184px;top:361px;width:79px;height:23px"></div>
<div class="c" style="left:1264px;top:361px;width:79px;height:23px"></div>
<div class="c" style="left:1344px;top:361px;width:79px;height:23px"></div>
<div class="c" style="left:1424px;top:361px;width:79px;height:23px"></div>
<div class="c" style="left:0px;top:385px;width:137px;height:23px"><span class="t" style="left:2.48px;top:2px;font-size:16px;line-height:21px;letter-spacing:0.43px;">Capital</span></div>
<div class="c" style="left:138px;top:385px;width:137px;height:23px"><span class="t" style="left:48.33px;top:2px;font-size:16px;line-height:21px;letter-spacing:0.09px;">$49,893.78</span></div>
<div class="c" style="left:276px;top:385px;width:137px;height:23px"><span class="t" style="left:88.33px;top:2px;font-size:16px;line-height:21px;letter-spacing:0.19px;">$0.00</span></div>
<div class="c" style="left:414px;top:385px;width:137px;height:23px"><span class="t" style="left:33.81px;top:2px;font-size:16px;line-height:21px;letter-spacing:0.31px;color:#ff0000;">($111,706.22)</span></div>
<div class="c" style="left:552px;top:385px;width:137px;height:23px"><span class="t" style="left:88.33px;top:2px;font-size:16px;line-height:21px;letter-spacing:0.19px;">$0.00</span></div>
<div class="c" style="left:690px;top:385px;width:137px;height:23px"><span class="t" style="left:39.33px;top:2px;font-size:16px;line-height:21px;letter-spacing:0.08px;">$161,600.00</span></div>
<div class="c" style="left:828px;top:385px;width:137px;height:23px"><span class="t" style="left:88.33px;top:2px;font-size:16px;line-height:21px;letter-spacing:0.19px;">$0.00</span></div>
<div class="c" style="left:966px;top:385px;width:137px;height:23px"></div>
<div class="c" style="left:1104px;top:385px;width:79px;height:23px"></div>
<div class="c" style="left:1184px;top:385px;width:79px;height:23px"></div>
<div class="c" style="left:1264px;top:385px;width:79px;height:23px"></div>
<div class="c" style="left:1344px;top:385px;width:79px;height:23px"></div>
<div class="c" style="left:1424px;top:385px;width:79px;height:23px"></div>
<div class="c" style="left:0px;top:409px;width:137px;height:23px"><span class="t" style="left:2.68px;top:2px;font-size:16px;line-height:21px;letter-spacing:0.27px;">Replacement</span></div>
<div class="c" style="left:138px;top:409px;width:137px;height:23px"><span class="t" style="left:39.33px;top:2px;font-size:16px;line-height:21px;letter-spacing:0.1px;">$148,903.81</span></div>
<div class="c" style="left:276px;top:409px;width:137px;height:23px"><span class="t" style="left:88.33px;top:2px;font-size:16px;line-height:21px;letter-spacing:0.19px;">$0.00</span></div>
<div class="c" style="left:414px;top:409px;width:137px;height:23px"><span class="t" style="left:88.33px;top:2px;font-size:16px;line-height:21px;letter-spacing:0.19px;">$0.00</span></div>
<div class="c" style="left:552px;top:409px;width:137px;height:23px"><span class="t" style="left:88.33px;top:2px;font-size:16px;line-height:21px;letter-spacing:0.19px;">$0.00</span></div>
<div class="c" style="left:690px;top:409px;width:137px;height:23px"><span class="t" style="left:39.33px;top:2px;font-size:16px;line-height:21px;letter-spacing:0.1px;">$148,903.81</span></div>
<div class="c" style="left:828px;top:409px;width:137px;height:23px"><span class="t" style="left:88.33px;top:2px;font-size:16px;line-height:21px;letter-spacing:0.19px;">$0.00</span></div>
<div class="c" style="left:966px;top:409px;width:137px;height:23px"></div>
<div class="c" style="left:1104px;top:409px;width:79px;height:23px"></div>
<div class="c" style="left:1184px;top:409px;width:79px;height:23px"></div>
<div class="c" style="left:1264px;top:409px;width:79px;height:23px"></div>
<div class="c" style="left:1344px;top:409px;width:79px;height:23px"></div>
<div class="c" style="left:1424px;top:409px;width:79px;height:23px"></div>
<div class="c" style="left:0px;top:433px;width:137px;height:23px"><span class="t" style="left:2.52px;top:2px;font-size:16px;line-height:21px;letter-spacing:0.45px;transform:scaleX(1.077);">O&amp;M</span></div>
<div class="c" style="left:138px;top:433px;width:137px;height:23px"><span class="t" style="left:26.33px;top:2px;font-size:16px;line-height:21px;letter-spacing:0.05px;">$1,466,138.67</span></div>
<div class="c" style="left:276px;top:433px;width:137px;height:23px"><span class="t" style="left:26.33px;top:2px;font-size:16px;line-height:21px;letter-spacing:0.14px;">$1,413,911.50</span></div>
<div class="c" style="left:414px;top:433px;width:137px;height:23px"><span class="t" style="left:88.33px;top:2px;font-size:16px;line-height:21px;letter-spacing:0.19px;">$0.00</span></div>
<div class="c" style="left:552px;top:433px;width:137px;height:23px"><span class="t" style="left:88.33px;top:2px;font-size:16px;line-height:21px;letter-spacing:0.19px;">$0.00</span></div>
<div class="c" style="left:690px;top:433px;width:137px;height:23px"><span class="t" style="left:48.33px;top:2px;font-size:16px;line-height:21px;letter-spacing:0.1px;">$52,227.17</span></div>
<div class="c" style="left:828px;top:433px;width:137px;height:23px"><span class="t" style="left:88.33px;top:2px;font-size:16px;line-height:21px;letter-spacing:0.19px;">$0.00</span></div>
<div class="c" style="left:966px;top:433px;width:137px;height:23px"></div>
<div class="c" style="left:1104px;top:433px;width:79px;height:23px"></div>
<div class="c" style="left:1184px;top:433px;width:79px;height:23px"></div>
<div class="c" style="left:1264px;top:433px;width:79px;height:23px"></div>
<div class="c" style="left:1344px;top:433px;width:79px;height:23px"></div>
<div class="c" style="left:1424px;top:433px;width:79px;height:23px"></div>
<div class="c" style="left:0px;top:457px;width:137px;height:23px"><span class="t" style="left:2.6px;top:2px;font-size:16px;line-height:21px;letter-spacing:0.12px;">Fuel</span></div>
<div class="c" style="left:138px;top:457px;width:137px;height:23px"><span class="t" style="left:88.33px;top:2px;font-size:16px;line-height:21px;letter-spacing:0.19px;">$0.00</span></div>
<div class="c" style="left:276px;top:457px;width:137px;height:23px"><span class="t" style="left:88.33px;top:2px;font-size:16px;line-height:21px;letter-spacing:0.19px;">$0.00</span></div>
<div class="c" style="left:414px;top:457px;width:137px;height:23px"><span class="t" style="left:88.33px;top:2px;font-size:16px;line-height:21px;letter-spacing:0.19px;">$0.00</span></div>
<div class="c" style="left:552px;top:457px;width:137px;height:23px"><span class="t" style="left:88.33px;top:2px;font-size:16px;line-height:21px;letter-spacing:0.19px;">$0.00</span></div>
<div class="c" style="left:690px;top:457px;width:137px;height:23px"><span class="t" style="left:88.33px;top:2px;font-size:16px;line-height:21px;letter-spacing:0.19px;">$0.00</span></div>
<div class="c" style="left:828px;top:457px;width:137px;height:23px"><span class="t" style="left:88.33px;top:2px;font-size:16px;line-height:21px;letter-spacing:0.19px;">$0.00</span></div>
<div class="c" style="left:966px;top:457px;width:137px;height:23px"></div>
<div class="c" style="left:1104px;top:457px;width:79px;height:23px"></div>
<div class="c" style="left:1184px;top:457px;width:79px;height:23px"></div>
<div class="c" style="left:1264px;top:457px;width:79px;height:23px"></div>
<div class="c" style="left:1344px;top:457px;width:79px;height:23px"></div>
<div class="c" style="left:1424px;top:457px;width:79px;height:23px"></div>
<div class="c" style="left:0px;top:481px;width:137px;height:23px"><span class="t" style="left:2.46px;top:2px;font-size:16px;line-height:21px;letter-spacing:-0.35px;">Salvage</span></div>
<div class="c" style="left:138px;top:481px;width:137px;height:23px"><span class="t" style="left:42.81px;top:2px;font-size:16px;line-height:21px;letter-spacing:0.11px;color:#ff0000;">($13,832.21)</span></div>
<div class="c" style="left:276px;top:481px;width:137px;height:23px"><span class="t" style="left:88.33px;top:2px;font-size:16px;line-height:21px;letter-spacing:0.19px;">$0.00</span></div>
<div class="c" style="left:414px;top:481px;width:137px;height:23px"><span class="t" style="left:88.33px;top:2px;font-size:16px;line-height:21px;letter-spacing:0.19px;">$0.00</span></div>
<div class="c" style="left:552px;top:481px;width:137px;height:23px"><span class="t" style="left:88.33px;top:2px;font-size:16px;line-height:21px;letter-spacing:0.19px;">$0.00</span></div>
<div class="c" style="left:690px;top:481px;width:137px;height:23px"><span class="t" style="left:42.81px;top:2px;font-size:16px;line-height:21px;letter-spacing:0.11px;color:#ff0000;">($13,832.21)</span></div>
<div class="c" style="left:828px;top:481px;width:137px;height:23px"><span class="t" style="left:88.33px;top:2px;font-size:16px;line-height:21px;letter-spacing:0.19px;">$0.00</span></div>
<div class="c" style="left:966px;top:481px;width:137px;height:23px"></div>
<div class="c" style="left:1104px;top:481px;width:79px;height:23px"></div>
<div class="c" style="left:1184px;top:481px;width:79px;height:23px"></div>
<div class="c" style="left:1264px;top:481px;width:79px;height:23px"></div>
<div class="c" style="left:1344px;top:481px;width:79px;height:23px"></div>
<div class="c" style="left:1424px;top:481px;width:79px;height:23px"></div>
<div class="c" style="left:0px;top:505px;width:137px;height:23px"><span class="t" style="left:2.52px;top:2px;font-size:16px;line-height:21px;letter-spacing:0.45px;transform:scaleX(1.095);">Total</span></div>
<div class="c" style="left:138px;top:505px;width:137px;height:23px"><span class="t" style="left:26.33px;top:2px;font-size:16px;line-height:21px;letter-spacing:0.03px;">$1,651,104.04</span></div>
<div class="c" style="left:276px;top:505px;width:137px;height:23px"><span class="t" style="left:26.33px;top:2px;font-size:16px;line-height:21px;letter-spacing:0.14px;">$1,413,911.50</span></div>
<div class="c" style="left:414px;top:505px;width:137px;height:23px"><span class="t" style="left:33.81px;top:2px;font-size:16px;line-height:21px;letter-spacing:0.31px;color:#ff0000;">($111,706.22)</span></div>
<div class="c" style="left:552px;top:505px;width:137px;height:23px"><span class="t" style="left:88.33px;top:2px;font-size:16px;line-height:21px;letter-spacing:0.19px;">$0.00</span></div>
<div class="c" style="left:690px;top:505px;width:137px;height:23px"><span class="t" style="left:39.33px;top:2px;font-size:16px;line-height:21px;letter-spacing:0.09px;">$348,898.76</span></div>
<div class="c" style="left:828px;top:505px;width:137px;height:23px"><span class="t" style="left:88.33px;top:2px;font-size:16px;line-height:21px;letter-spacing:0.19px;">$0.00</span></div>
<div class="c" style="left:966px;top:505px;width:137px;height:23px"></div>
<div class="c" style="left:1104px;top:505px;width:79px;height:23px"></div>
<div class="c" style="left:1184px;top:505px;width:79px;height:23px"></div>
<div class="c" style="left:1264px;top:505px;width:79px;height:23px"></div>
<div class="c" style="left:1344px;top:505px;width:79px;height:23px"></div>
<div class="c" style="left:1424px;top:505px;width:79px;height:23px"></div>
<div class="c" style="left:0px;top:529px;width:137px;height:23px"></div>
<div class="c" style="left:138px;top:529px;width:137px;height:23px"></div>
<div class="c" style="left:276px;top:529px;width:137px;height:23px"></div>
<div class="c" style="left:414px;top:529px;width:137px;height:23px"></div>
<div class="c" style="left:552px;top:529px;width:137px;height:23px"></div>
<div class="c" style="left:690px;top:529px;width:137px;height:23px"></div>
<div class="c" style="left:828px;top:529px;width:137px;height:23px"></div>
<div class="c" style="left:966px;top:529px;width:137px;height:23px"></div>
<div class="c" style="left:1104px;top:529px;width:79px;height:23px"></div>
<div class="c" style="left:1184px;top:529px;width:79px;height:23px"></div>
<div class="c" style="left:1264px;top:529px;width:79px;height:23px"></div>
<div class="c" style="left:1344px;top:529px;width:79px;height:23px"></div>
<div class="c" style="left:1424px;top:529px;width:79px;height:23px"></div>
<div class="c" style="left:0px;top:553px;width:137px;height:23px"><span class="t" style="left:2.48px;top:2px;font-size:16px;line-height:21px;letter-spacing:-0.02px;">Cost Summary (Annualized)</span></div>
<div class="c" style="left:138px;top:553px;width:137px;height:23px"><span class="t" style="left:2.46px;top:2px;font-size:16px;line-height:21px;letter-spacing:-0.21px;">System</span></div>
<div class="c" style="left:276px;top:553px;width:137px;height:23px"><span class="t" style="left:2.57px;top:2px;font-size:16px;line-height:21px;letter-spacing:0.22px;">General - Time of Use</span></div>
<div class="c" style="left:414px;top:553px;width:137px;height:23px"><span class="t" style="left:2.46px;top:2px;font-size:16px;line-height:21px;letter-spacing:-0.34px;">SGIP- Large Storage</span></div>
<div class="c" style="left:552px;top:553px;width:137px;height:23px"><span class="t" style="left:2.62px;top:2px;font-size:16px;line-height:21px;letter-spacing:-0.48px;">HOMER Peak Shaving</span></div>
<div class="c" style="left:690px;top:553px;width:137px;height:23px"><span class="t" style="left:2.57px;top:2px;font-size:16px;line-height:21px;letter-spacing:0.07px;">Generic 1kWh Li-Ion</span></div>
<div class="c" style="left:828px;top:553px;width:275px;height:23px"><span class="t" style="left:2.57px;top:2px;font-size:16px;line-height:21px;letter-spacing:0.2px;">Generic large, free converter</span></div>
<div class="c" style="left:1104px;top:553px;width:79px;height:23px"></div>
<div class="c" style="left:1184px;top:553px;width:79px;height:23px"></div>
<div class="c" style="left:1264px;top:553px;width:79px;height:23px"></div>
<div class="c" style="left:1344px;top:553px;width:79px;height:23px"></div>
<div class="c" style="left:1424px;top:553px;width:79px;height:23px"></div>
<div class="c" style="left:0px;top:577px;width:137px;height:23px"><span class="t" style="left:2.48px;top:2px;font-size:16px;line-height:21px;letter-spacing:0.43px;">Capital</span></div>
<div class="c" style="left:138px;top:577px;width:137px;height:23px"><span class="t" style="left:57.33px;top:2px;font-size:16px;line-height:21px;letter-spacing:0.08px;">$3,859.50</span></div>
<div class="c" style="left:276px;top:577px;width:137px;height:23px"><span class="t" style="left:88.33px;top:2px;font-size:16px;line-height:21px;letter-spacing:0.19px;">$0.00</span></div>
<div class="c" style="left:414px;top:577px;width:137px;height:23px"><span class="t" style="left:51.81px;top:2px;font-size:16px;line-height:21px;letter-spacing:0.11px;color:#ff0000;">($8,640.97)</span></div>
<div class="c" style="left:552px;top:577px;width:137px;height:23px"><span class="t" style="left:88.33px;top:2px;font-size:16px;line-height:21px;letter-spacing:0.19px;">$0.00</span></div>
<div class="c" style="left:690px;top:577px;width:137px;height:23px"><span class="t" style="left:48.33px;top:2px;font-size:16px;line-height:21px;letter-spacing:0.1px;">$12,500.47</span></div>
<div class="c" style="left:828px;top:577px;width:137px;height:23px"><span class="t" style="left:88.33px;top:2px;font-size:16px;line-height:21px;letter-spacing:0.19px;">$0.00</span></div>
<div class="c" style="left:966px;top:577px;width:137px;height:23px"></div>
<div class="c" style="left:1104px;top:577px;width:79px;height:23px"></div>
<div class="c" style="left:1184px;top:577px;width:79px;height:23px"></div>
<div class="c" style="left:1264px;top:577px;width:79px;height:23px"></div>
<div class="c" style="left:1344px;top:577px;width:79px;height:23px"></div>
<div class="c" style="left:1424px;top:577px;width:79px;height:23px"></div>
<div class="c" style="left:0px;top:601px;width:137px;height:23px"><span class="t" style="left:2.68px;top:2px;font-size:16px;line-height:21px;letter-spacing:0.27px;">Replacement</span></div>
<div class="c" style="left:138px;top:601px;width:137px;height:23px"><span class="t" style="left:48.33px;top:2px;font-size:16px;line-height:21px;letter-spacing:0.22px;">$11,518.36</span></div>
<div class="c" style="left:276px;top:601px;width:137px;height:23px"><span class="t" style="left:88.33px;top:2px;font-size:16px;line-height:21px;letter-spacing:0.19px;">$0.00</span></div>
<div class="c" style="left:414px;top:601px;width:137px;height:23px"><span class="t" style="left:88.33px;top:2px;font-size:16px;line-height:21px;letter-spacing:0.19px;">$0.00</span></div>
<div class="c" style="left:552px;top:601px;width:137px;height:23px"><span class="t" style="left:88.33px;top:2px;font-size:16px;line-height:21px;letter-spacing:0.19px;">$0.00</span></div>
<div class="c" style="left:690px;top:601px;width:137px;height:23px"><span class="t" style="left:48.33px;top:2px;font-size:16px;line-height:21px;letter-spacing:0.22px;">$11,518.36</span></div>
<div class="c" style="left:828px;top:601px;width:137px;height:23px"><span class="t" style="left:88.33px;top:2px;font-size:16px;line-height:21px;letter-spacing:0.19px;">$0.00</span></div>
<div class="c" style="left:966px;top:601px;width:137px;height:23px"></div>
<div class="c" style="left:1104px;top:601px;width:79px;height:23px"></div>
<div class="c" style="left:1184px;top:601px;width:79px;height:23px"></div>
<div class="c" style="left:1264px;top:601px;width:79px;height:23px"></div>
<div class="c" style="left:1344px;top:601px;width:79px;height:23px"></div>
<div class="c" style="left:1424px;top:601px;width:79px;height:23px"></div>
<div class="c" style="left:0px;top:625px;width:137px;height:23px"><span class="t" style="left:2.52px;top:2px;font-size:16px;line-height:21px;letter-spacing:0.45px;transform:scaleX(1.077);">O&amp;M</span></div>
<div class="c" style="left:138px;top:625px;width:137px;height:23px"><span class="t" style="left:39.33px;top:2px;font-size:16px;line-height:21px;letter-spacing:0.19px;">$113,412.24</span></div>
<div class="c" style="left:276px;top:625px;width:137px;height:23px"><span class="t" style="left:39.33px;top:2px;font-size:16px;line-height:21px;letter-spacing:0.07px;">$109,372.24</span></div>
<div class="c" style="left:414px;top:625px;width:137px;height:23px"><span class="t" style="left:88.33px;top:2px;font-size:16px;line-height:21px;letter-spacing:0.19px;">$0.00</span></div>
<div class="c" style="left:552px;top:625px;width:137px;height:23px"><span class="t" style="left:88.33px;top:2px;font-size:16px;line-height:21px;letter-spacing:0.19px;">$0.00</span></div>
<div class="c" style="left:690px;top:625px;width:137px;height:23px"><span class="t" style="left:57.33px;top:2px;font-size:16px;line-height:21px;letter-spacing:0.08px;">$4,040.00</span></div>
<div class="c" style="left:828px;top:625px;width:137px;height:23px"><span class="t" style="left:88.33px;top:2px;font-size:16px;line-height:21px;letter-spacing:0.19px;">$0.00</span></div>
<div class="c" style="left:966px;top:625px;width:137px;height:23px"></div>
<div class="c" style="left:1104px;top:625px;width:79px;height:23px"></div>
<div class="c" style="left:1184px;top:625px;width:79px;height:23px"></div>
<div class="c" style="left:1264px;top:625px;width:79px;height:23px"></div>
<div class="c" style="left:1344px;top:625px;width:79px;height:23px"></div>
<div class="c" style="left:1424px;top:625px;width:79px;height:23px"></div>
<div class="c" style="left:0px;top:649px;width:137px;height:23px"><span class="t" style="left:2.6px;top:2px;font-size:16px;line-height:21px;letter-spacing:0.12px;">Fuel</span></div>
<div class="c" style="left:138px;top:649px;width:137px;height:23px"><span class="t" style="left:88.33px;top:2px;font-size:16px;line-height:21px;letter-spacing:0.19px;">$0.00</span></div>
<div class="c" style="left:276px;top:649px;width:137px;height:23px"><span class="t" style="left:88.33px;top:2px;font-size:16px;line-height:21px;letter-spacing:0.19px;">$0.00</span></div>
<div class="c" style="left:414px;top:649px;width:137px;height:23px"><span class="t" style="left:88.33px;top:2px;font-size:16px;line-height:21px;letter-spacing:0.19px;">$0.00</span></div>
<div class="c" style="left:552px;top:649px;width:137px;height:23px"><span class="t" style="left:88.33px;top:2px;font-size:16px;line-height:21px;letter-spacing:0.19px;">$0.00</span></div>
<div class="c" style="left:690px;top:649px;width:137px;height:23px"><span class="t" style="left:88.33px;top:2px;font-size:16px;line-height:21px;letter-spacing:0.19px;">$0.00</span></div>
<div class="c" style="left:828px;top:649px;width:137px;height:23px"><span class="t" style="left:88.33px;top:2px;font-size:16px;line-height:21px;letter-spacing:0.19px;">$0.00</span></div>
<div class="c" style="left:966px;top:649px;width:137px;height:23px"></div>
<div class="c" style="left:1104px;top:649px;width:79px;height:23px"></div>
<div class="c" style="left:1184px;top:649px;width:79px;height:23px"></div>
<div class="c" style="left:1264px;top:649px;width:79px;height:23px"></div>
<div class="c" style="left:1344px;top:649px;width:79px;height:23px"></div>
<div class="c" style="left:1424px;top:649px;width:79px;height:23px"></div>
<div id="selbox"></div><div id="selhandle"></div>
</div>
<div class="tabedge" style="left:0;width:101px"></div><div class="tabedge" style="left:178px;width:1278px"></div>
</div>
</body>
</html>
